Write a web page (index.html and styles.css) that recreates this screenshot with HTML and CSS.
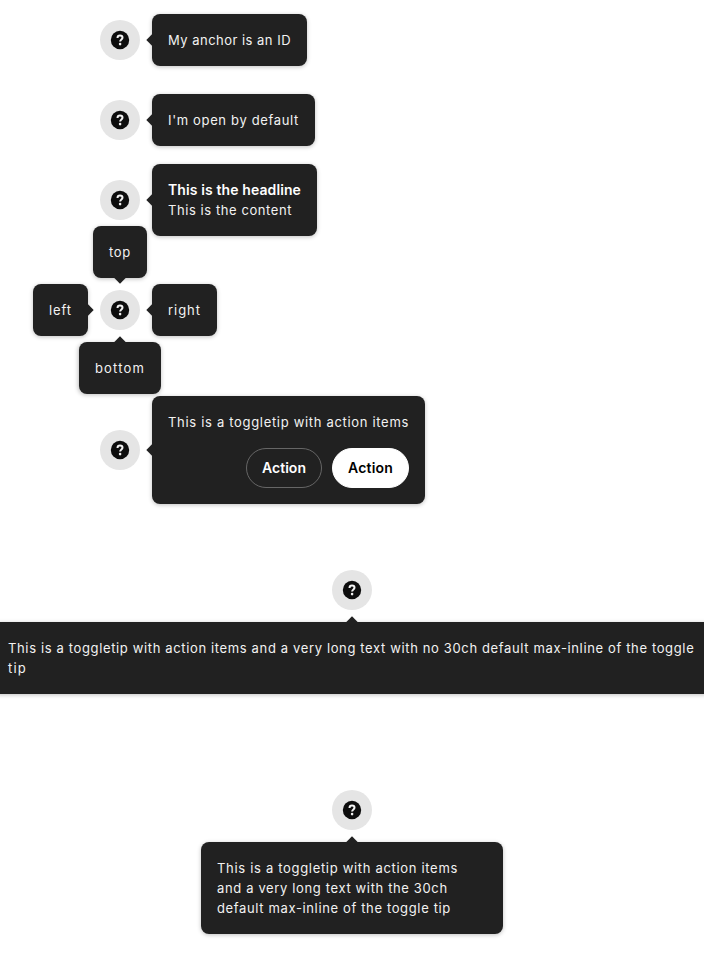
FILE: index.html
```html
<!DOCTYPE html>
<html lang="en">
<head>
<meta charset="utf-8">
<title>Toggletip</title>
<link rel="stylesheet" href="styles.css">
</head>
<body>
<svg class="defs" aria-hidden="true"><symbol id="help" viewBox="0 0 20 20"><circle cx="10" cy="10" r="9.2" fill="#0d0d0d"/><path d="M7.5 8C7.5 6.4 8.6 5.6 10 5.6s2.5.9 2.5 2.2c0 1.6-2.4 1.7-2.4 3.7" fill="none" stroke="#f2f2f2" stroke-width="2"/><circle cx="10.1" cy="14.1" r="1.3" fill="#f2f2f2"/></symbol></svg>
<main class="demo">
  <div class="anchor">
    <svg class="icon"><use href="#help"/></svg>
    <div class="tip right"><p class="track-s">My anchor is an ID</p></div>
  </div>
  <div class="anchor">
    <svg class="icon"><use href="#help"/></svg>
    <div class="tip right"><p class="track-m">I'm open by default</p></div>
  </div>
  <div class="anchor">
    <svg class="icon"><use href="#help"/></svg>
    <div class="tip right"><h2>This is the headline</h2><p class="track-content">This is the content</p></div>
  </div>
  <div class="anchor multi">
    <svg class="icon"><use href="#help"/></svg>
    <div class="tip top"><p class="track-top">top</p></div>
    <div class="tip right"><p class="track-l">right</p></div>
    <div class="tip left"><p class="track-l">left</p></div>
    <div class="tip bottom"><p class="track-xl">bottom</p></div>
  </div>
  <div class="anchor actions-anchor">
    <svg class="icon"><use href="#help"/></svg>
    <div class="tip right">
      <p class="track-items">This is a toggletip with action items</p>
      <div class="actions"><button class="ghost">Action</button><button class="solid">Action</button></div>
    </div>
  </div>
  <div class="anchor centered">
    <svg class="icon"><use href="#help"/></svg>
    <div class="tip bottom full"><p>This is a toggletip with action items and a very long text with no 30ch default max-inline of the toggle <span class="track-xl">tip</span></p></div>
  </div>
  <div class="anchor centered last">
    <svg class="icon"><use href="#help"/></svg>
    <div class="tip bottom medium"><p><span class="track-items">This is a toggletip with action items</span><br>and a very long text with the 30ch<br>default max-inline of the toggle tip</p></div>
  </div>
</main>
</body>
</html>
```
FILE: styles.css
```css
* { box-sizing: border-box; }
body { margin: 0; overflow: hidden; background: #fff; font: 13px/20px Inter, sans-serif; }
.defs { position: absolute; width: 0; height: 0; }
.demo { display: flex; flex-direction: column; align-items: flex-start; gap: 40px; height: 960px; padding: 20px 0 0 100px; }
.anchor { position: relative; display: grid; place-items: center; flex: none; width: 40px; height: 40px; border-radius: 50%; background: #e5e5e5; }
.multi { margin-top: 30px; }
.actions-anchor { margin-top: 60px; }
.centered { align-self: center; margin: 60px 100px 0 0; }
.last { margin-top: 140px; }
.icon { width: 20px; height: 20px; }

.tip { position: absolute; width: max-content; padding: 16px; border-radius: 8px; background: #212121; color: #f2f2f2; box-shadow: 0 1px 4px rgba(0, 0, 0, .25); }
.tip::before { content: ""; position: absolute; width: 8px; height: 8px; background: #212121; transform: rotate(45deg); }
.right { left: 52px; top: 50%; translate: 0 -50%; }
.right::before { left: -4px; top: calc(50% - 4px); }
.left { right: 52px; top: 50%; translate: 0 -50%; }
.left::before { right: -4px; top: calc(50% - 4px); }
.top { bottom: 52px; left: 50%; translate: -50% 0; }
.top::before { bottom: -4px; left: calc(50% - 4px); }
.bottom { top: 52px; left: 50%; translate: -50% 0; }
.bottom::before { top: -4px; left: calc(50% - 4px); }
.full { width: 720px; }
.medium { width: 302px; }

.tip p, .tip h2 { margin: 0; letter-spacing: .638px; }
.tip h2 { font-size: 14px; line-height: 20px; font-weight: 600; color: #fff; letter-spacing: .106px; }
.tip .track-s { letter-spacing: .478px; }
.tip .track-m { letter-spacing: .658px; }
.tip .track-content { letter-spacing: .572px; }
.tip .track-top { letter-spacing: .703px; }
.tip .track-items { letter-spacing: .683px; }
.tip .track-l { letter-spacing: .94px; }
.tip .track-xl { letter-spacing: 1.167px; }

.actions { display: flex; justify-content: flex-end; gap: 10px; margin-top: 16px; }
button { height: 40px; padding: 0 15px; border: 1px solid #666; border-radius: 20px; background: none; color: #fff; font: 600 14px/20px Inter, sans-serif; letter-spacing: .03px; }
.solid { border-color: #fff; background: #fff; color: #000; letter-spacing: .195px; }
```
